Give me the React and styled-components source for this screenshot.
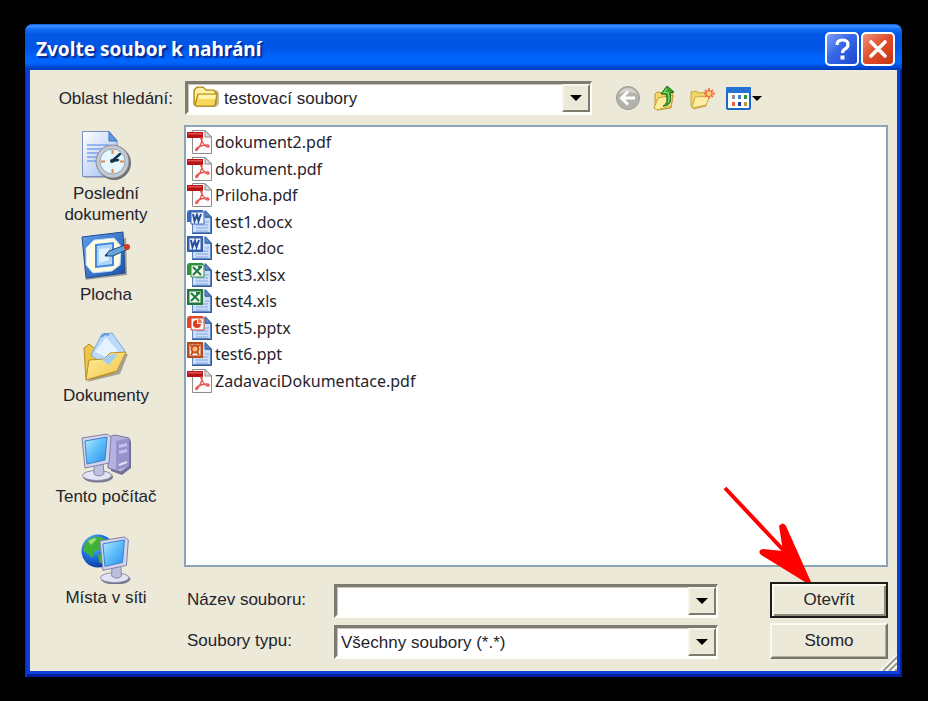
import React, { useState } from "react";
import styled, { createGlobalStyle } from "styled-components";

const GlobalStyle = createGlobalStyle`
  * {
    box-sizing: border-box;
  }

  body {
    margin: 0;
    background: #000;
    color: #24242c;
    font-family: "Liberation Sans", Arial, sans-serif;
    font-size: 17px;
    line-height: 21px;
  }

  button, input, select {
    font: inherit;
    color: inherit;
  }
`;

const Desktop = styled.div`
  min-height: 100vh;
  display: flex;
  padding: 24px 26px 24px 25px;
  background: #000;
`;

const Dialog = styled.div`
  flex: 1;
  display: flex;
  flex-direction: column;
  padding: 0 5px 6px;
  border-radius: 8px 8px 0 0;
  background: #0a40d8;
  box-shadow: inset 2px 0 #0831d9, inset -2px -3px #001ea0;
`;

const TitleBar = styled.header`
  display: flex;
  align-items: center;
  gap: 2px;
  height: 46px;
  margin: 0 -5px;
  padding: 3px 7px 0 11px;
  border-radius: 8px 8px 0 0;
  background: linear-gradient(#0a5ae0 0, #3c96ff 2px, #1470f4 5px, #0458e4 10px, #0054e6 24px, #0064fc 34px, #0066ff 39px, #0048d0 43px, #003cc0 46px);
`;

const Title = styled.h1`
  flex: 1;
  margin: 0;
  color: #fff;
  font-family: "Noto Sans", "Trebuchet MS", sans-serif;
  font-size: 19px;
  font-weight: 700;
  line-height: 26px;
  text-shadow: 2px 2px 1px #0a2a8c;
`;

const TitleButton = styled.button`
  width: 34px;
  height: 34px;
  padding: 0;
  border: 2px solid #fff;
  border-radius: 5px;
  background: ${(props) =>
    props.$danger
      ? "linear-gradient(135deg, #f0937c, #e0502e 45%, #c83410)"
      : "linear-gradient(135deg, #7ba0f8, #3666e8 45%, #1c48d0)"};

  svg {
    display: block;
  }
`;

const Body = styled.main`
  position: relative;
  flex: 1;
  display: flex;
  flex-direction: column;
  gap: 10px;
  padding: 11px 9px 12px 0;
  background: #ece9d8;
`;

const LookIn = styled.div`
  display: flex;
  align-items: center;
`;

const LookInLabel = styled.label`
  width: 155px;
  padding-right: 12px;
  text-align: right;
`;

const Field = styled.div`
  position: relative;
  flex: 1;
  height: 34px;
  max-width: ${(props) => props.$max || "none"};
  border: 2px solid;
  border-width: 3px 2px 3px 3px;
  border-color: #7d7b6f #fffffa #fffffa #7d7b6f;
  background: #fff;
  box-shadow: inset 1px 1px #c8c6ba;
`;

const Select = styled.select`
  appearance: none;
  width: 100%;
  height: 100%;
  padding: 0 32px 0 ${(props) => (props.$icon ? "36px" : "4px")};
  border: 0;
  outline: 0;
  background: transparent;
`;

const Input = styled.input`
  width: 100%;
  height: 100%;
  padding: 0 32px 0 4px;
  border: 0;
  outline: 0;
  background: transparent;
`;

const FieldIcon = styled.span`
  position: absolute;
  top: 0;
  left: 4px;
  pointer-events: none;
`;

const DropMark = styled.span`
  position: absolute;
  top: 0;
  right: 0;
  width: 28px;
  height: 28px;
  display: grid;
  place-items: center;
  border: 2px solid;
  border-color: #f6f4ea #7d7b6f #7d7b6f #f6f4ea;
  background: #ece9d8;
  pointer-events: none;
`;

const Toolbar = styled.div`
  display: flex;
  gap: 11px;
  margin-left: 23px;
`;

const ToolButton = styled.button`
  display: flex;
  align-items: center;
  gap: 1px;
  padding: 0;
  border: 0;
  background: none;
`;

const Columns = styled.div`
  flex: 1;
  display: grid;
  grid-template-columns: 152px minmax(0, 1fr);
  column-gap: 2px;
`;

const Places = styled.nav`
  display: flex;
  flex-direction: column;
  padding-top: 5px;
`;

const Place = styled.a`
  display: flex;
  flex-direction: column;
  align-items: center;
  gap: 3px;
  min-height: 101px;
  padding: 0 20px;
  color: inherit;
  text-align: center;
  text-decoration: none;

  svg {
    flex: none;
  }
`;

const Content = styled.div`
  display: flex;
  flex-direction: column;
  gap: 14px;
`;

const FileBox = styled.div`
  flex: 1;
  padding: 2px 1px;
  border: 2px solid #8ca4ba;
  background: #fff;
`;

const FileList = styled.ul`
  display: grid;
  grid-auto-rows: 1fr;
  height: 265px;
  margin: 0;
  padding: 0;
  list-style: none;
`;

const FileRow = styled.li`
  display: flex;
  align-items: center;
`;

const FileButton = styled.button`
  display: flex;
  align-items: center;
  gap: 2px;
  padding: 0;
  border: 0;
  background: none;
  font-family: "Noto Sans", Tahoma, sans-serif;
  font-size: 16px;
  line-height: 26px;
`;

const Footer = styled.form`
  display: grid;
  grid-template-columns: 150px minmax(0, 1fr) 118px;
  align-items: end;
  row-gap: 4px;
`;

const FieldLabel = styled.label`
  padding: 8px 3px;
`;

const FieldCell = styled.div`
  display: flex;
  margin-right: 52px;
`;

const ActionCell = styled.div`
  position: relative;
`;

const PushButton = styled.button`
  display: block;
  width: 100%;
  height: 36px;
  padding: 0 0 2px;
  border: 2px solid;
  border-color: ${(props) => (props.$primary ? "#1c1c18" : "#fbfaf2 #77756a #77756a #fbfaf2")};
  background: #ece9d8;
  box-shadow: ${(props) =>
    props.$primary
      ? "inset 2px 2px #fbfaf2, inset -2px -2px #8c8a7c"
      : "inset -1px -1px #b4b1a2"};
`;

const Pointer = styled.svg`
  position: absolute;
  right: 77px;
  bottom: 100%;
  overflow: visible;
  pointer-events: none;
`;

const Grip = styled.svg`
  position: absolute;
  right: 0;
  bottom: 0;
`;

const Triangle = ({ size = 12 }) => (
  <svg width={size} height={size / 2} viewBox="0 0 12 6">
    <path d="M0 0h12L6 6z" fill="#000" />
  </svg>
);

const FolderIcon = () => (
  <svg width="28" height="26" viewBox="0 0 28 26">
    <path d="M4 23h20l3-3V9l-2-3z" fill="#a8a38c" opacity=".7" />
    <path d="M2 20V6l3-3h6l3 3h8l2 2v12l-2 2H4z" fill="#f0c93c" stroke="#a98212" strokeWidth="1.2" />
    <path d="M3 18V6l3-2h5l3 3h8v3H7z" fill="#fdf0a0" />
    <path d="M3 21 6 10h19l-2 11-1 1H4z" fill="#f6d95c" stroke="#b08b1c" strokeWidth="1.2" />
    <path d="M7 11h17l-1 4H6z" fill="#fff3ac" />
  </svg>
);

const BackIcon = () => (
  <svg width="26" height="26" viewBox="0 0 26 26">
    <circle cx="13" cy="13" r="11.5" fill="#b3b2ac" stroke="#9b9a94" />
    <path d="M4 9a10 10 0 0 1 18 0Q13 5 4 9z" fill="#d3d2cc" />
    <path d="M13 6.5 6.500 13l6.500 6.500M7.500 13H20" fill="none" stroke="#fff" strokeWidth="3" />
  </svg>
);

const UpIcon = () => (
  <svg width="26" height="28" viewBox="0 0 26 28">
    <path d="M3 10l2-2 5 1 2 1 8-2 1 4-2 12-13 2-3-2z" fill="#f5d867" stroke="#bd9830" />
    <path d="M2 24 6 14l15-3-2 11-14 4z" fill="#fcec9c" stroke="#c5a03c" />
    <path d="M11 22c4-2 5-6 3-12H9l6-8 7 6-4 1c2 8 0 13-7 13z" fill="#34a62c" stroke="#14691a" />
    <path d="M15 4.500 12 8.500h4q2 6 0 10" fill="none" stroke="#8cdc6c" strokeWidth="1.2" />
  </svg>
);

const NewFolderIcon = () => (
  <svg width="26" height="26" viewBox="0 0 26 26">
    <path d="M2 21V7l5-1 3 2 8-1v5l-1 9-12 3z" fill="#f3d567" stroke="#c9a440" />
    <path d="M3 23 6 12l15-1-4 9z" fill="#fdeea6" stroke="#cfaa48" />
    <path d="M20 3v11M15 8.500h11M16 5l8 7M24 5l-8 7" stroke="#f2784a" strokeWidth="1.800" />
    <circle cx="20" cy="8.500" r="3" fill="#ffd27c" stroke="#ee5c34" />
  </svg>
);

const ViewsIcon = () => (
  <svg width="25" height="24" viewBox="0 0 25 24">
    <rect x="1" y="2" width="23" height="21" rx="1" fill="#fff" stroke="#1c68c4" strokeWidth="2" />
    <path d="M0 2q0-1 1-1h23q1 0 1 1v5H0z" fill="#2472d4" />
    <path d="M6 9h3v4H6z" fill="#8c8ca0" />
    <path d="M12 9h3v4h-3z" fill="#3f7fd8" />
    <path d="M18 9h3v4h-3z" fill="#2e9440" />
    <path d="M6 16h3v4H6z" fill="#e26444" />
    <path d="M12 16h3v4h-3z" fill="#1c3c94" />
    <path d="M18 16h3v4h-3z" fill="#b89a44" />
  </svg>
);

const RecentIcon = () => (
  <svg width="50" height="50" viewBox="0 0 50 50">
    <defs>
      <linearGradient id="page" x1="0" y1="0" x2="1" y2="1">
        <stop offset="0" stopColor="#fff" />
        <stop offset="1" stopColor="#9dbcf0" />
      </linearGradient>
    </defs>
    <path d="M3 48h34V14z" fill="#807e78" opacity=".5" />
    <path d="M1.500 1.500H28l8 9v36H1.500z" fill="url(#page)" stroke="#7690c8" />
    <path d="M28 1.500V11h8z" fill="#5a98e0" stroke="#4272b8" />
    <path d="M6 15h22M6 19h16M6 23h12M6 27h10M6 31h9" stroke="#7ba4ea" strokeWidth="1.5" />
    <circle cx="33" cy="33" r="17" fill="#6e6e70" />
    <circle cx="31.500" cy="31.500" r="16.500" fill="#c4c8ce" stroke="#85898f" />
    <circle cx="31.500" cy="31.500" r="12.500" fill="#e5f6fd" stroke="#8fa6b8" />
    <path d="M31.500 20v4M31.500 39v4M20 31.500h4M39 31.500h4" stroke="#e4884c" strokeWidth="2" />
    <path d="m31 31 8-7M31 31l6-1" stroke="#17344c" strokeWidth="2.4" strokeLinecap="round" />
    <circle cx="31" cy="31" r="2" fill="#17344c" />
  </svg>
);

const DesktopIcon = () => (
  <svg width="50" height="50" viewBox="0 0 50 50">
    <defs>
      <linearGradient id="pad" x1="0" y1="0" x2="1" y2="1">
        <stop offset="0" stopColor="#5c9fe8" />
        <stop offset="1" stopColor="#1c50ac" />
      </linearGradient>
    </defs>
    <path d="M4 49 46 44 45 6z" fill="#6c6a64" opacity=".6" />
    <path d="M1 6 42 1l2 41L5 47z" fill="url(#pad)" stroke="#204c94" />
    <path d="M13 9 33 7l7 8-1 19-8 6-19 2-7-8V17z" fill="#fffce4" stroke="#b7d5f6" />
    <path d="m15 14 17-2v22l-17 2z" fill="#afd5fb" stroke="#4289df" strokeWidth="2" />
    <path d="m18 18 10-1v12l-10 3z" fill="#dff1ff" />
    <path d="m24 25 4-5 16-6 3 4-15 7z" fill="#65a4dc" stroke="#204878" />
    <path d="m24 25 3-1-2-1z" fill="#111" />
    <circle cx="46" cy="16" r="3" fill="#cc3c1c" />
  </svg>
);

const DocumentsIcon = () => (
  <svg width="50" height="50" viewBox="0 0 50 50">
    <defs>
      <linearGradient id="docfold" x1="0" y1="0" x2="1" y2="1">
        <stop offset="0" stopColor="#fff0a0" />
        <stop offset="1" stopColor="#f0c344" />
      </linearGradient>
    </defs>
    <path d="m6 50 33-8 8-20-8-1z" fill="#77756a" opacity=".6" />
    <path d="m3 16 5-4 8 6 22 3-5 20-28 7z" fill="#ecc44c" stroke="#b58b24" />
    <path d="m21 2 10-1 13 18-14 19-20-15z" fill="#b9dafa" stroke="#7da7da" />
    <path d="m25 5 12 14-12 6-11-5z" fill="#e4f3ff" />
    <path d="m20 5 4-3 4 1" fill="none" stroke="#5c98dc" strokeWidth="2" />
    <path d="m5 48 3-20 15-1 6-6 16-1-9 19z" fill="url(#docfold)" stroke="#ba9128" />
    <path d="m21 28 7 5 9-11-9 1z" fill="#a4cdf4" />
  </svg>
);

const Monitor = () => (
  <g>
    <ellipse cx="17" cy="44" rx="15" ry="5.500" fill="#77758c" />
    <ellipse cx="16" cy="42.500" rx="14.500" ry="5" fill="#e4e4f4" stroke="#8c8cac" />
    <path d="m13 30 9-1 1 12q-5 4-10 0z" fill="#bebede" stroke="#8888b0" />
    <path d="m1 5 25-4 4 3-2 26-24 5z" fill="#d4d4ec" stroke="#8080a8" />
    <path d="m4 8 22-4-2 23-18 4z" fill="url(#screen)" stroke="#3c80c4" />
  </g>
);

const ScreenGradient = () => (
  <defs>
    <linearGradient id="screen" x1="0" y1="0" x2="1" y2="1">
      <stop offset="0" stopColor="#b4ecff" />
      <stop offset=".5" stopColor="#5cbcfb" />
      <stop offset="1" stopColor="#2c8cec" />
    </linearGradient>
  </defs>
);

const ComputerIcon = () => (
  <svg width="50" height="50" viewBox="0 0 50 50">
    <ScreenGradient />
    <path d="m31 5 18 1 1 3v26l-9 7-11-4z" fill="#73709a" />
    <path d="m27 4 7-2 14 3v28l-8 6-13-4z" fill="#b4b2de" stroke="#77759e" />
    <path d="m35 8 13-3v28l-13 4z" fill="#9693cc" />
    <path d="m38 12 8-2v3l-8 2zM38 18l8-2v3l-8 2z" fill="#c4c2ec" />
    <path d="m38 32 8-3" stroke="#e4e4fa" strokeWidth="2" />
    <Monitor />
  </svg>
);

const NetworkIcon = () => (
  <svg width="50" height="50" viewBox="0 0 50 50">
    <ScreenGradient />
    <defs>
      <radialGradient id="globe" cx=".35" cy=".3" r=".8">
        <stop offset="0" stopColor="#76c4ff" />
        <stop offset=".5" stopColor="#1c6ee0" />
        <stop offset="1" stopColor="#0c2c94" />
      </radialGradient>
    </defs>
    <circle cx="17" cy="17" r="16.500" fill="url(#globe)" />
    <path d="M4 10Q10 1 20 3l5 3-5 4-1 6-5 1-3 7-5-5-4-2zM17 21l7-3 5 5-5 8-6-3z" fill="#3eb038" />
    <path d="m7 7 6-3 3 1-6 6z" fill="#9be06c" />
    <g transform="translate(18 2) scale(.98)">
      <Monitor />
    </g>
  </svg>
);

const PdfIcon = () => (
  <svg width="26" height="26" viewBox="0 0 26 26">
    <path d="M5.500 1.500H18l6.500 6.500v16.500h-19z" fill="#fbfbfb" stroke="#8c8c8c" />
    <path d="M18 1.500V8h6.500z" fill="#dadada" stroke="#8c8c8c" />
    <path d="M0 3h16v6H0z" fill="#b81414" />
    <path d="M1 4h14v1.500H1z" fill="#e25050" />
    <path d="M14 10c2 4 3 8 7 8 2 0 1-2-1-2-4 0-9 2-11 4-1 2 1 2 2 0 2-3 4-6 4-10 0-2-2-1-1 0z" fill="none" stroke="#e8524e" strokeWidth="1.3" />
  </svg>
);

const OfficeIcon = ({ color, mark, x }) => (
  <svg width="26" height="26" viewBox="0 0 26 26">
    <path d="M5 2h14l6 6v17H5z" fill="#5d82be" />
    <path d="M6 2h12v7h5v14H6z" fill="#cbdffa" />
    <path d="M18 1.500V8h6z" fill="#5d87c8" stroke="#38609c" />
    <path d="M9 16h12M9 19h12M9 22h12M18 13h4" stroke="#84a7dd" />
    <path d="M5 24.500h19.500V8" fill="none" stroke="#365d9d" />
    {x ? (
      <path d="M0 13V4q0-3 3-3h13v3H5v9z" fill={color} />
    ) : (
      <path d="M0 1h16v16H0z" fill={color} />
    )}
    <path d={x ? "M4 3h13v12H4z" : "M2 3h12v12H2z"} fill="#f3f7fc" stroke={color} />
    <g transform={x ? "translate(2 0)" : undefined}>{mark}</g>
  </svg>
);

const WordMark = <path d="m4 5 1.500 7L8 6l1.500 6L12 5" fill="none" stroke="#244e9c" strokeWidth="2" />;
const ExcelMark = <path d="m4 5 8 8M12 5l-8 8M9 5h4" fill="none" stroke="#1e7d36" strokeWidth="2" />;
const PointMark = (
  <g fill="#d84020">
    <path d="M8 9V5a4 4 0 1 0 4 4z" />
    <path d="M9 4v4h4a4 4 0 0 0-4-4z" fill="#f07c4c" />
  </g>
);
const OldPointMark = (
  <g fill="none" stroke="#c84c18" strokeWidth="2">
    <circle cx="8" cy="8" r="3.500" fill="#f8bc78" />
    <path d="m3 4 3 2M13 4l-3 2M4 14l2-3M12 14l-2-3" />
  </g>
);

const icons = {
  pdf: <PdfIcon />,
  docx: <OfficeIcon x color="#396bc0" mark={WordMark} />,
  doc: <OfficeIcon color="#3560ac" mark={WordMark} />,
  xlsx: <OfficeIcon x color="#31903c" mark={ExcelMark} />,
  xls: <OfficeIcon color="#247838" mark={ExcelMark} />,
  pptx: <OfficeIcon x color="#dc4828" mark={PointMark} />,
  ppt: <OfficeIcon color="#b84a1c" mark={OldPointMark} />,
};

const files = [
  "dokument2.pdf",
  "dokument.pdf",
  "Priloha.pdf",
  "test1.docx",
  "test2.doc",
  "test3.xlsx",
  "test4.xls",
  "test5.pptx",
  "test6.ppt",
  "ZadavaciDokumentace.pdf",
];

const places = [
  { name: "Poslední dokumenty", icon: <RecentIcon /> },
  { name: "Plocha", icon: <DesktopIcon /> },
  { name: "Dokumenty", icon: <DocumentsIcon /> },
  { name: "Tento počítač", icon: <ComputerIcon /> },
  { name: "Místa v síti", icon: <NetworkIcon /> },
];

const App = () => {
  const [fileName, setFileName] = useState("");

  return (
    <Desktop>
      <GlobalStyle />
      <Dialog role="dialog" aria-labelledby="title">
        <TitleBar>
          <Title id="title">Zvolte soubor k nahrání</Title>
          <TitleButton aria-label="Nápověda">
            <svg width="30" height="30" viewBox="0 0 30 30">
              <path d="M10 11q0-5 5.500-5t5.500 4.500q0 3-3 4.500-2.500 1.500-2.500 4" fill="none" stroke="#fff" strokeWidth="3.200" />
              <path d="M13.500 21.500h4v4h-4z" fill="#fff" />
            </svg>
          </TitleButton>
          <TitleButton $danger aria-label="Zavřít">
            <svg width="30" height="30" viewBox="0 0 30 30">
              <path d="m8 8 14 14M22 8 8 22" stroke="#fff" strokeWidth="3.600" strokeLinecap="round" />
            </svg>
          </TitleButton>
        </TitleBar>

        <Body>
          <LookIn>
            <LookInLabel htmlFor="folder">Oblast hledání:</LookInLabel>
            <Field $max="407px">
              <FieldIcon><FolderIcon /></FieldIcon>
              <Select id="folder" $icon>
                <option>testovací soubory</option>
              </Select>
              <DropMark><Triangle /></DropMark>
            </Field>
            <Toolbar>
              <ToolButton aria-label="Zpět"><BackIcon /></ToolButton>
              <ToolButton aria-label="O úroveň výš"><UpIcon /></ToolButton>
              <ToolButton aria-label="Nová složka"><NewFolderIcon /></ToolButton>
              <ToolButton aria-label="Zobrazit">
                <ViewsIcon />
                <Triangle size={10} />
              </ToolButton>
            </Toolbar>
          </LookIn>

          <Columns>
            <Places>
              {places.map((place) => (
                <Place key={place.name} href="#">
                  {place.icon}
                  {place.name}
                </Place>
              ))}
            </Places>

            <Content>
              <FileBox>
                <FileList>
                  {files.map((file) => (
                    <FileRow key={file}>
                      <FileButton onClick={() => setFileName(file)}>
                        {icons[file.split(".").pop()]}
                        {file}
                      </FileButton>
                    </FileRow>
                  ))}
                </FileList>
              </FileBox>

              <Footer onSubmit={(e) => e.preventDefault()}>
                <FieldLabel htmlFor="name">Název souboru:</FieldLabel>
                <FieldCell>
                  <Field>
                    <Input id="name" value={fileName} onChange={(e) => setFileName(e.target.value)} />
                    <DropMark><Triangle /></DropMark>
                  </Field>
                </FieldCell>
                <ActionCell>
                  <PushButton $primary type="submit">Otevřít</PushButton>
                  <Pointer width="90" height="96" viewBox="0 0 90 96">
                    <path d="m4 2 62 66" stroke="#f00" strokeWidth="4" />
                    <path d="M90 96h-6L40 69q-4-5 2-6l20 2-4-25q4-5 7 0z" fill="#f00" />
                  </Pointer>
                </ActionCell>

                <FieldLabel htmlFor="type">Soubory typu:</FieldLabel>
                <FieldCell>
                  <Field>
                    <Select id="type">
                      <option>Všechny soubory (*.*)</option>
                    </Select>
                    <DropMark><Triangle /></DropMark>
                  </Field>
                </FieldCell>
                <PushButton type="button">Stomo</PushButton>
              </Footer>
            </Content>
          </Columns>
          <Grip width="18" height="18" viewBox="0 0 18 18">
            <path d="M2 18 18 2M8 18 18 8M14 18l4-4" stroke="#fff" strokeWidth="2" />
            <path d="M4 18 18 4M10 18l8-8M16 18l2-2" stroke="#9c9a8c" strokeWidth="2" />
          </Grip>
        </Body>
      </Dialog>
    </Desktop>
  );
};

export default App;
